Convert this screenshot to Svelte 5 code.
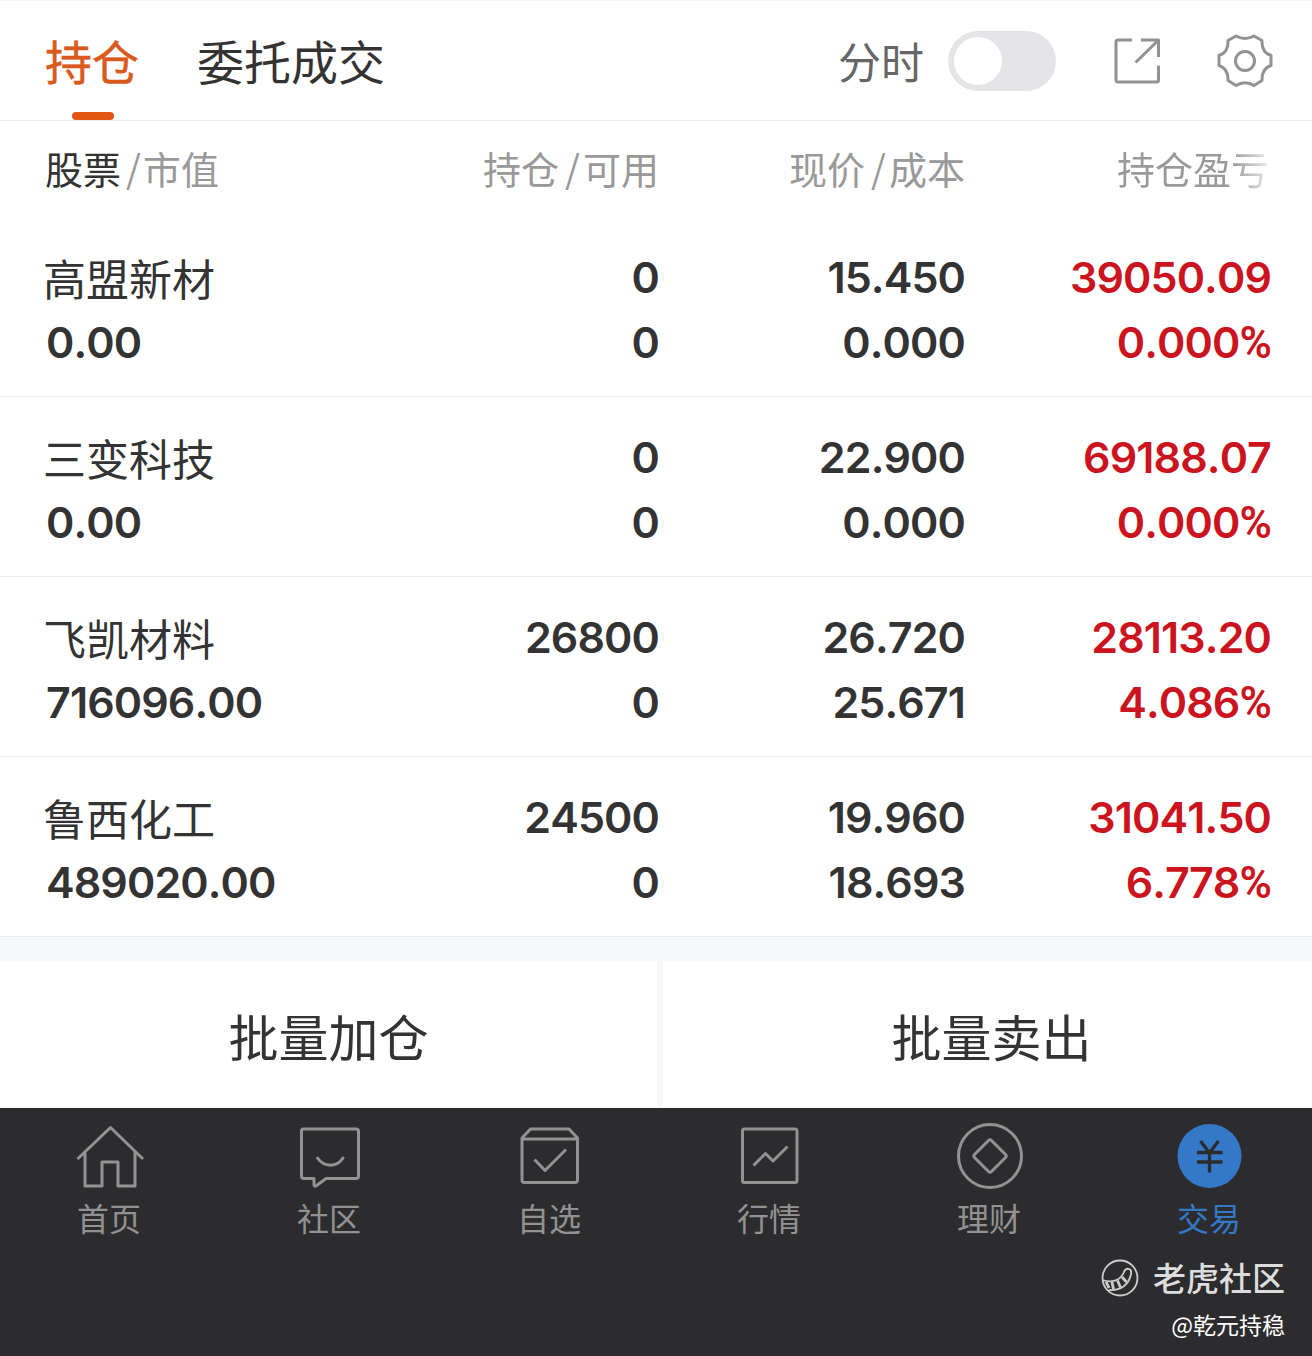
<script>
  let minuteChart = $state(false);
  let tab = $state("持仓");

  const headers = [
    ["股票", "市值"],
    ["持仓", "可用"],
    ["现价", "成本"],
  ];

  const stocks = [
    { name: "高盟新材", value: "0.00", held: "0", usable: "0", price: "15.450", cost: "0.000", profit: "39050.09", rate: "0.000" },
    { name: "三变科技", value: "0.00", held: "0", usable: "0", price: "22.900", cost: "0.000", profit: "69188.07", rate: "0.000" },
    { name: "飞凯材料", value: "716096.00", held: "26800", usable: "0", price: "26.720", cost: "25.671", profit: "28113.20", rate: "4.086" },
    { name: "鲁西化工", value: "489020.00", held: "24500", usable: "0", price: "19.960", cost: "18.693", profit: "31041.50", rate: "6.778" },
  ];

  const nav = [
    { label: "首页", icon: "home" },
    { label: "社区", icon: "chat" },
    { label: "自选", icon: "pick" },
    { label: "行情", icon: "chart" },
    { label: "理财", icon: "coin" },
    { label: "交易", icon: "trade" },
  ];
  let page = $state("交易");
</script>

<div class="app">
  <header>
    {#each ["持仓", "委托成交"] as name}
      <button class="tab" class:active={tab === name} onclick={() => (tab = name)}>{name}</button>
    {/each}
    <span class="mode">分时</span>
    <button
      class="switch"
      class:on={minuteChart}
      aria-label="分时"
      onclick={() => (minuteChart = !minuteChart)}><i></i></button
    >
    <svg class="share" width="48" height="48" viewBox="0 0 48 48">
      <path d="M20 3H6Q4 3 4 5V43Q4 45 6 45H44.500Q46.500 45 46.500 43V28.500" />
      <path d="M29 3H46.500V20M45.500 4L23.500 25.500" />
    </svg>
    <svg class="gear" width="56" height="56" viewBox="-28 -28 56 56">
      <path
        d="M-9-25Q0-20 9-25L17-20.500Q16.500-8.500 26-5.500V4.500Q16.500 7.500 17 19.500L9 24.500Q0 19 -9 24.500L-17 19.500Q-16.500 7.500 -26 4.500V-5.500Q-16.500-8.500 -17-20.500Z"
      />
      <circle r="9.500" />
    </svg>
  </header>

  <div class="row head">
    {#each headers as [top, bottom], i}
      <div class="cell"><b class:dark={i === 0}>{top}</b><em>/</em>{bottom}</div>
    {/each}
    <div class="cell fade">持仓盈亏</div>
  </div>

  {#each stocks as s}
    <div class="row stock">
      <div class="cell"><span class="name">{s.name}</span><span>{s.value}</span></div>
      <div class="cell"><span>{s.held}</span><span>{s.usable}</span></div>
      <div class="cell"><span>{s.price}</span><span>{s.cost}</span></div>
      <div class="cell up"><span>{s.profit}</span><span>{s.rate}<small>%</small></span></div>
    </div>
  {/each}

  <div class="batch">
    <button>批量加仓</button>
    <button>批量卖出</button>
  </div>

  <footer>
    <nav>
      {#each nav as item}
        <button class:current={page === item.label} onclick={() => (page = item.label)}>
          <svg width="72" height="72" viewBox="0 0 72 72">
            {#if item.icon === "home"}
              <path d="M3.500 39L36.500 7.500L69 39M11 32V66H28V42H44V66H61V32" />
            {:else if item.icon === "chat"}
              <path d="M9 9H62Q64.500 9 64.500 11.500V56Q64.500 58.500 62 58.500H32L22 66Q20 67 20 64.500V58.500H10Q7.500 58.500 7.500 56V11Q7.500 9 9 9Z" />
              <path stroke-linecap="round" d="M23.500 38C30 47.500 43 47.500 49 38" />
            {:else if item.icon === "pick"}
              <path d="M8 18L16.500 9H55L63.500 18V60Q63.500 62.500 61 62.500H10.500Q8 62.500 8 60ZM8 19H63.500M20.500 39.500L31 50.500L52 29.500" />
            {:else if item.icon === "chart"}
              <rect x="8.500" y="9" width="54.500" height="53.500" rx="2" />
              <path d="M19.500 45.500L31.500 33.500L39 41L53.500 26.500" />
            {:else if item.icon === "coin"}
              <circle cx="36" cy="36" r="31.500" />
              <path d="M34.500 20.500Q36 19 37.500 20.500L51.500 34.500Q53 36 51.500 37.500L37.500 51.500Q36 53 34.500 51.500L20.500 37.500Q19 36 20.500 34.500Z" />
            {:else}
              <circle class="disc" cx="35.500" cy="36" r="32" />
              <path class="yen" d="M26.500 21L35.500 33L44.500 21M35.500 32V52.500M23 32.500H48.500M23 42H48.500" />
            {/if}
          </svg>
          <span>{item.label}</span>
        </button>
      {/each}
    </nav>
    <div class="brand">
      <svg width="40" height="40" viewBox="0 0 40 40">
        <circle cx="20" cy="20" r="17.500" />
        <path d="M2.500 22C11 25 20 23 23.500 15C26 8.500 32 10 31 16C29 27 20 33 9 32" />
        <path class="stripe" d="M6 23.500L9 30M12 24L13.500 31.500M17.500 22.500L20.500 29.500M22 19L26.500 24" />
      </svg>
      <span>老虎社区</span>
    </div>
    <div class="user">@乾元持稳</div>
  </footer>
</div>

<style>
  :global(body) {
    background: #fff;
  }
  .app {
    width: 1312px;
    height: 1356px;
    display: flex;
    flex-direction: column;
    overflow: hidden;
    background: #fff;
    color: #333;
    font-family: Inter, "Noto Sans CJK SC", sans-serif;
  }
  button {
    border: 0;
    padding: 0;
    background: none;
    color: inherit;
    font: inherit;
  }
  svg {
    display: block;
    fill: none;
    stroke: #929292;
    stroke-width: 3;
    stroke-linejoin: round;
  }
  header {
    height: 121px;
    box-sizing: border-box;
    display: flex;
    align-items: center;
    border-top: 1px solid #f5f5f5;
    border-bottom: 1px solid #ececec;
    padding: 0 39px 0 45px;
  }
  .tab {
    position: relative;
    height: 119px;
    margin-right: 58px;
    padding-bottom: 2px;
    font-size: 47px;
    white-space: nowrap;
  }
  .tab.active {
    color: #d95a1c;
    -webkit-text-stroke: 0.5px #d95a1c;
  }
  .tab.active::after {
    content: "";
    position: absolute;
    left: 27px;
    bottom: 0;
    width: 42px;
    height: 8px;
    border-radius: 4px;
    background: #e35513;
  }
  .mode {
    margin-left: auto;
    padding-bottom: 2px;
    font-size: 43px;
    color: #666;
  }
  .switch {
    width: 108px;
    height: 60px;
    margin: 0 56px 0 24px;
    border-radius: 30px;
    background: #e5e5e7;
  }
  .switch i {
    display: block;
    width: 48px;
    height: 48px;
    margin-left: 6px;
    border-radius: 50%;
    background: #fff;
  }
  .switch.on {
    background: #e35513;
  }
  .switch.on i {
    margin-left: 54px;
  }
  .gear {
    margin-left: 57px;
  }
  .row {
    display: grid;
    grid-template-columns: 308px 306px 306px 306px;
    padding-left: 45px;
  }
  .cell {
    text-align: right;
    white-space: nowrap;
  }
  .cell:first-child {
    text-align: left;
  }
  .head {
    height: 96px;
    box-sizing: border-box;
    padding-top: 1px;
    line-height: 96px;
    font-size: 38px;
    color: #999;
  }
  .head b {
    font-weight: 400;
  }
  .head .dark {
    color: #333;
  }
  em {
    display: inline-block;
    width: 24px;
    box-sizing: border-box;
    padding-left: 3px;
    font: 38px/1 "Noto Sans CJK SC", sans-serif;
    text-align: center;
    vertical-align: 1px;
  }
  .dark + em {
    width: 22px;
  }
  .fade {
    padding-right: 2px;
    background: linear-gradient(90deg, #999 75%, #eee);
    background-size: 155px 100%;
    background-position: right;
    background-repeat: no-repeat;
    background-clip: text;
    color: transparent;
  }
  .stock {
    height: 180px;
    box-sizing: border-box;
    border-bottom: 1px solid #ebebeb;
    padding-top: 28px;
    font-size: 43px;
    font-weight: 560;
    font-kerning: none;
    letter-spacing: -0.9px;
  }
  .stock span {
    display: block;
    height: 65px;
    line-height: 65px;
  }
  .stock .cell:first-child span {
    margin-left: 1px;
  }
  .stock .cell:first-child .name {
    margin-left: -2px;
    line-height: 71px;
    font-weight: 400;
    letter-spacing: 0;
  }
  .stock small {
    font-family: Roboto, sans-serif;
    font-size: 44px;
    line-height: 1;
  }
  .up {
    color: #cb1420;
  }
  .batch {
    height: 171px;
    box-sizing: border-box;
    display: flex;
    gap: 6px;
    padding-top: 24px;
    background: #f7f8fa;
  }
  .batch button {
    width: 657px;
    flex: none;
    background: #fff;
    font-size: 50px;
  }
  footer {
    flex: 1;
    background: #2c2c2e;
  }
  nav {
    display: flex;
    height: 140px;
  }
  nav button {
    width: 220px;
    flex: none;
    display: flex;
    flex-direction: column;
    align-items: center;
    padding-top: 12px;
    font-size: 32px;
    line-height: 56px;
    color: #929292;
  }
  nav span {
    padding-right: 2px;
  }
  nav .current {
    color: #3478c8;
  }
  .disc {
    fill: #3478c8;
    stroke: none;
  }
  .yen {
    stroke: #2c2c2e;
    stroke-width: 3.300;
    stroke-linejoin: miter;
  }
  .brand {
    display: flex;
    justify-content: flex-end;
    align-items: center;
    gap: 13px;
    height: 60px;
    padding-right: 27px;
    font-size: 33px;
    line-height: 58px;
    font-weight: 500;
    color: #ddd;
  }
  .brand span {
    padding-top: 1px;
  }
  .brand svg {
    stroke: #ccc;
    stroke-width: 1.800;
  }
  .brand .stripe {
    stroke-width: 2.800;
  }
  .user {
    padding-right: 27px;
    text-align: right;
    font-family: "Noto Sans CJK SC", sans-serif;
    font-size: 23px;
    line-height: 32px;
    color: #fff;
  }
</style>
